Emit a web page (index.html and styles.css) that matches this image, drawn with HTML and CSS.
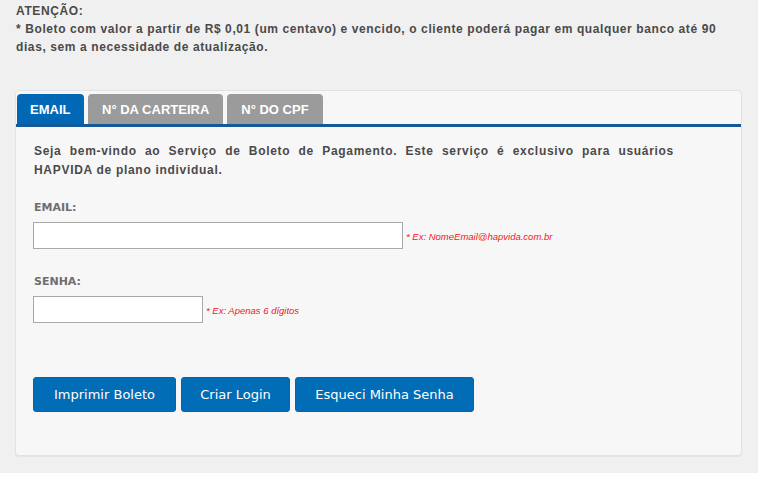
FILE: index.html
```html
<!DOCTYPE html>
<html lang="pt-BR">
<head>
<meta charset="utf-8">
<title>Boleto de Pagamento</title>
<link rel="stylesheet" href="styles.css">
</head>
<body>
<div class="page">
  <div class="notice">
    <p class="notice-title">ATENÇÃO:</p>
    <p class="notice-text">* Boleto com valor a partir de R$ 0,01 (um centavo) e vencido, o cliente poderá pagar em qualquer banco até 90 dias, sem a necessidade de atualização.</p>
  </div>
  <div class="card">
    <div class="tabs">
      <div class="tab active">EMAIL</div>
      <div class="tab">N° DA CARTEIRA</div>
      <div class="tab">N° DO CPF</div>
    </div>
    <div class="panel">
      <p class="welcome">Seja bem-vindo ao Serviço de Boleto de Pagamento. Este serviço é exclusivo para usuários HAPVIDA de plano individual.</p>
      <label class="field-label">EMAIL:</label>
      <div class="field-row">
        <input class="input input-email" type="text">
        <span class="hint">* Ex: NomeEmail@hapvida.com.br</span>
      </div>
      <label class="field-label label-senha">SENHA:</label>
      <div class="field-row">
        <input class="input input-senha" type="password">
        <span class="hint">* Ex: Apenas 6 dígitos</span>
      </div>
      <div class="actions">
        <button class="btn btn-imprimir">Imprimir Boleto</button>
        <button class="btn btn-criar">Criar Login</button>
        <button class="btn btn-esqueci">Esqueci Minha Senha</button>
      </div>
    </div>
  </div>
</div>
</body>
</html>
```

FILE: styles.css
```css
* { box-sizing: border-box; }
html, body { margin: 0; padding: 0; background: #ffffff; }
body { font-family: "Liberation Sans", Arial, sans-serif; }

.page {
  width: 758px;
  height: 473px;
  background: #f0f0f0;
  padding: 2px 0 0 0;
  overflow: hidden;
}

.notice { padding-left: 16px; color: #4a4a4a; font-weight: bold; font-size: 12px; letter-spacing: 0.6px; }
.notice-title { margin: 0; line-height: 18px; }
.notice-text { margin: 0; line-height: 18px; width: 720px; }

.card {
  margin: 34px 0 0 15px;
  width: 727px;
  height: 366px;
  background: #f7f7f7;
  border: 1px solid #e2e2e2;
  border-radius: 4px;
  box-shadow: 0 1px 1px rgba(0,0,0,0.05);
}

.tabs {
  display: flex;
  gap: 4px;
  padding: 3px 0 0 1px;
  border-bottom: 3px solid #15599a;
}
.tab {
  height: 30px;
  line-height: 31px;
  padding: 0 14px;
  background: #9b9b9b;
  color: #ffffff;
  font-weight: bold;
  font-size: 13px;
  border-radius: 4px 4px 0 0;
}
.tab.active { background: #0068b4; padding: 0 13px; width: 67px; }

.panel { padding: 15px 18px 0 18px; display: flex; flex-direction: column; align-items: flex-start; }

.welcome {
  margin: 0;
  width: 640px;
  text-align: justify;
  font-weight: bold;
  font-size: 12px;
  line-height: 19px;
  letter-spacing: 0.7px;
  color: #4a4a4a;
}

.field-label {
  margin-top: 21px;
  font-family: "DejaVu Sans", Verdana, sans-serif;
  font-weight: bold;
  font-size: 11px;
  line-height: 14px;
  color: #6e6e6e;
}
.label-senha { margin-top: 26px; }

.field-row { display: flex; align-items: center; margin-top: 7px; margin-left: -1px; }
.input {
  height: 27px;
  border: 1px solid #a9a9a9;
  background: #ffffff;
  margin: 0;
  padding: 0 4px;
}
.input-email { width: 370px; }
.input-senha { width: 170px; }
.hint {
  margin-left: 3px;
  font-size: 9.5px;
  font-style: italic;
  color: #ee2020;
  padding-top: 2px;
}

.actions { display: flex; gap: 5px; margin-top: 54px; margin-left: -1px; }
.btn {
  height: 35px;
  border: 1px solid #0a62a8;
  border-radius: 3px;
  background: #006db6;
  color: #ffffff;
  font-family: "DejaVu Sans", Verdana, sans-serif;
  font-size: 13px;
  padding: 0;
}
.btn-imprimir { width: 143px; }
.btn-criar { width: 109px; }
.btn-esqueci { width: 179px; }
```
